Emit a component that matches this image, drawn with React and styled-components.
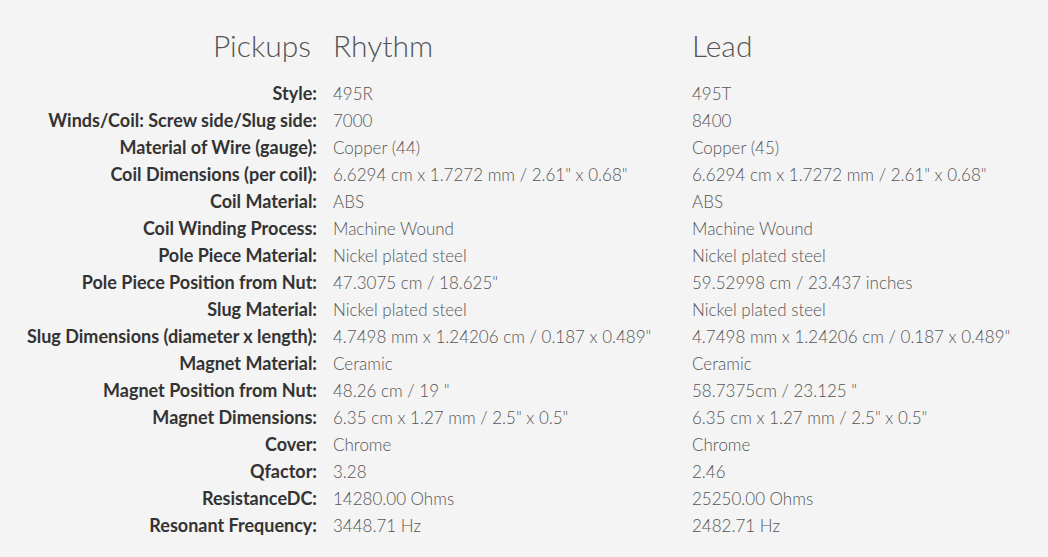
import React from "react";
import styled, { createGlobalStyle } from "styled-components";

const GlobalStyle = createGlobalStyle`
  html, body {
    margin: 0;
    background: #f4f4f4;
  }
  body {
    font-family: Lato, "Open Sans", sans-serif;
  }
`;

const rows = [
  ["Style:", "495R", "495T"],
  ["Winds/Coil: Screw side/Slug side:", "7000", "8400"],
  ["Material of Wire (gauge):", "Copper (44)", "Copper (45)"],
  ["Coil Dimensions (per coil):", "6.6294 cm x 1.7272 mm / 2.61\" x 0.68\"", "6.6294 cm x 1.7272 mm / 2.61\" x 0.68\""],
  ["Coil Material:", "ABS", "ABS"],
  ["Coil Winding Process:", "Machine Wound", "Machine Wound"],
  ["Pole Piece Material:", "Nickel plated steel", "Nickel plated steel"],
  ["Pole Piece Position from Nut:", "47.3075 cm / 18.625\"", "59.52998 cm / 23.437 inches"],
  ["Slug Material:", "Nickel plated steel", "Nickel plated steel"],
  ["Slug Dimensions (diameter x length):", "4.7498 mm x 1.24206 cm / 0.187 x 0.489\"", "4.7498 mm x 1.24206 cm / 0.187 x 0.489\""],
  ["Magnet Material:", "Ceramic", "Ceramic"],
  ["Magnet Position from Nut:", "48.26 cm / 19 \"", "58.7375cm / 23.125 \""],
  ["Magnet Dimensions:", "6.35 cm x 1.27 mm / 2.5\" x 0.5\"", "6.35 cm x 1.27 mm / 2.5\" x 0.5\""],
  ["Cover:", "Chrome", "Chrome"],
  ["Qfactor:", "3.28", "2.46"],
  ["ResistanceDC:", "14280.00 Ohms", "25250.00 Ohms"],
  ["Resonant Frequency:", "3448.71 Hz", "2482.71 Hz"],
];

const Specs = styled.div`
  display: grid;
  grid-template-columns: 317px 359px 1fr;
  padding-top: 26px;
`;

const Heading = styled.div`
  font-size: 30px;
  font-weight: 300;
  color: #555;
  line-height: 38px;
  padding-left: ${(p) => (p.$label ? 0 : "16px")};
  padding-right: ${(p) => (p.$label ? "6px" : 0)};
  text-align: ${(p) => (p.$label ? "right" : "left")};
  margin-bottom: 16px;
`;

const Label = styled.div`
  font-size: 18px;
  font-weight: 700;
  color: #333;
  line-height: 27px;
  text-align: right;
  white-space: nowrap;
`;

const Value = styled.div`
  font-size: 17px;
  font-weight: 300;
  color: #555;
  line-height: 27px;
  padding-left: 16px;
  white-space: nowrap;
`;

export default function App() {
  return (
    <>
      <GlobalStyle />
      <Specs>
        <Heading $label>Pickups</Heading>
        <Heading>Rhythm</Heading>
        <Heading>Lead</Heading>
        {rows.map(([label, rhythm, lead]) => (
          <React.Fragment key={label}>
            <Label>{label}</Label>
            <Value>{rhythm}</Value>
            <Value>{lead}</Value>
          </React.Fragment>
        ))}
      </Specs>
    </>
  );
}
